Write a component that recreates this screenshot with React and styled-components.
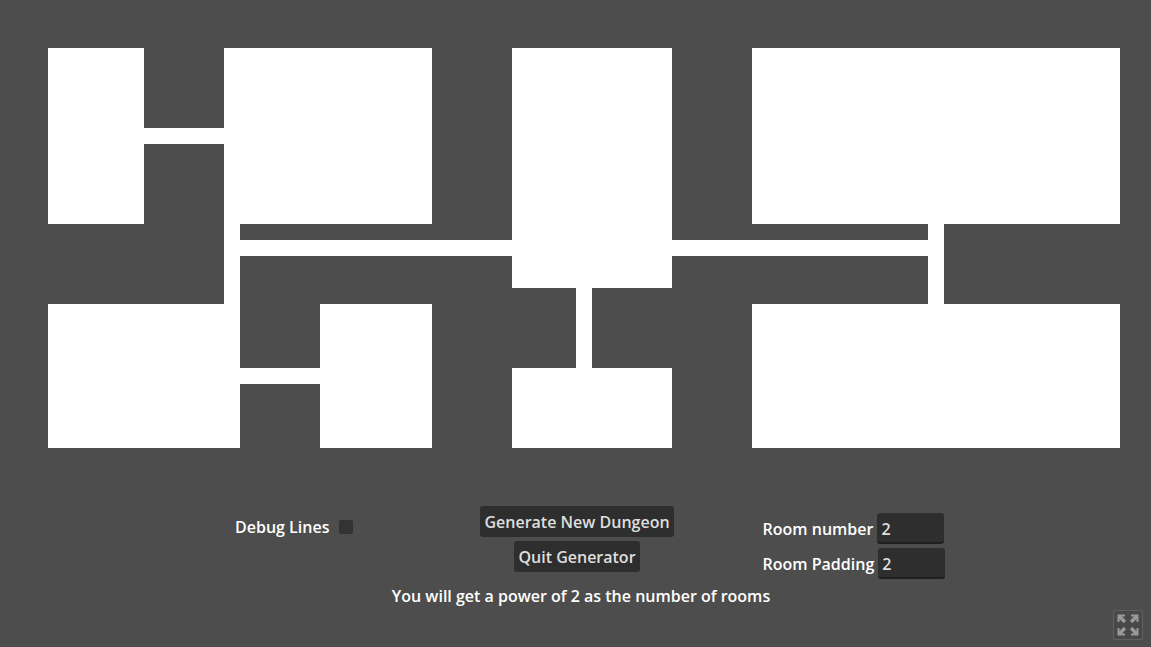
import React, { useState } from "react";
import styled, { createGlobalStyle } from "styled-components";

const GlobalStyle = createGlobalStyle`
  * { box-sizing: border-box; }
  body {
    margin: 0;
    background: #4d4d4d;
    color: #fff;
    font: 600 16px/24px "Open Sans", "Noto Sans", sans-serif;
  }
  button, input { font: inherit; }
`;

const Page = styled.main`
  position: relative;
  display: flex;
  flex-direction: column;
  min-height: 100vh;
`;

const Dungeon = styled.svg`
  display: block;
  width: 100%;
  height: auto;
  fill: #fff;
`;

const Controls = styled.section`
  display: grid;
  grid-template-columns: 1fr auto 1fr;
  margin-top: 58px;
  padding-left: 3px;
`;

const DebugLabel = styled.label`
  display: flex;
  align-items: center;
  align-self: start;
  justify-self: end;
  gap: 10px;
  margin-right: 127px;
  padding-top: 9px;
`;

const CheckBox = styled.input`
  appearance: none;
  width: 14px;
  height: 14px;
  margin: 0;
  border-radius: 2px;
  background: #333;
  &:checked { background: #b0b0b0; }
`;

const Actions = styled.div`
  display: flex;
  flex-direction: column;
  align-items: center;
  gap: 4px;
`;

const ActionButton = styled.button`
  height: 31px;
  padding: 0 4px;
  border: 0;
  border-radius: 3px;
  background: #2e2e2e;
  color: #dfdfdf;
  white-space: nowrap;
`;

const Fields = styled.div`
  display: flex;
  flex-direction: column;
  gap: 4px;
  margin-left: 89px;
  padding-top: 7px;
`;

const FieldLabel = styled.label`
  display: flex;
  align-items: center;
  gap: 4px;
  white-space: nowrap;
`;

const FieldInput = styled.input`
  width: 67px;
  height: 31px;
  padding: 2px 4px 0;
  border: 0;
  border-bottom: 2px solid #1f1f1f;
  border-radius: 3px;
  background: #2e2e2e;
  color: #dfdfdf;
`;

const Message = styled.p`
  margin: 5px 0 0;
  padding-left: 11px;
  text-align: center;
`;

const FullscreenButton = styled.button`
  position: absolute;
  right: 8px;
  bottom: 7px;
  width: 30px;
  height: 30px;
  padding: 3px;
  border: 1px solid #5f5f5f;
  background: #484848;
  svg { display: block; fill: #999; }
`;

const rooms = [
  [48, 48, 96, 176],
  [224, 48, 208, 176],
  [512, 48, 160, 240],
  [752, 48, 368, 176],
  [48, 304, 192, 144],
  [320, 304, 112, 144],
  [512, 368, 160, 80],
  [752, 304, 368, 144],
];

const corridors = [
  [144, 128, 80, 16],
  [224, 224, 16, 80],
  [240, 240, 272, 16],
  [672, 240, 272, 16],
  [928, 224, 16, 80],
  [576, 288, 16, 80],
  [240, 368, 80, 16],
];

const arrow = "M0.5 0.5H8V2.5H5L9.2 6.7L6.7 9.2L2.5 5V8H0.5Z";

export default function App() {
  const [debug, setDebug] = useState(false);
  const [count, setCount] = useState("2");
  const [padding, setPadding] = useState("2");

  return (
    <Page>
      <GlobalStyle />
      <Dungeon viewBox="0 0 1151 448" shapeRendering="crispEdges" role="img" aria-label="Dungeon map">
        {[...rooms, ...corridors].map(([x, y, width, height]) => (
          <rect key={`${x}-${y}`} x={x} y={y} width={width} height={height} />
        ))}
      </Dungeon>
      <Controls>
        <DebugLabel>
          Debug Lines
          <CheckBox type="checkbox" checked={debug} onChange={(e) => setDebug(e.target.checked)} />
        </DebugLabel>
        <Actions>
          <ActionButton type="button">Generate New Dungeon</ActionButton>
          <ActionButton type="button">Quit Generator</ActionButton>
        </Actions>
        <Fields>
          <FieldLabel>
            Room number
            <FieldInput value={count} onChange={(e) => setCount(e.target.value)} />
          </FieldLabel>
          <FieldLabel>
            Room Padding
            <FieldInput value={padding} onChange={(e) => setPadding(e.target.value)} />
          </FieldLabel>
        </Fields>
      </Controls>
      <Message>You will get a power of 2 as the number of rooms</Message>
      <FullscreenButton type="button" aria-label="Fullscreen">
        <svg width="22" height="22" viewBox="0 0 22 22">
          <path d={arrow} />
          <path d={arrow} transform="translate(22 0) scale(-1 1)" />
          <path d={arrow} transform="translate(0 22) scale(1 -1)" />
          <path d={arrow} transform="translate(22 22) scale(-1 -1)" />
        </svg>
      </FullscreenButton>
    </Page>
  );
}
